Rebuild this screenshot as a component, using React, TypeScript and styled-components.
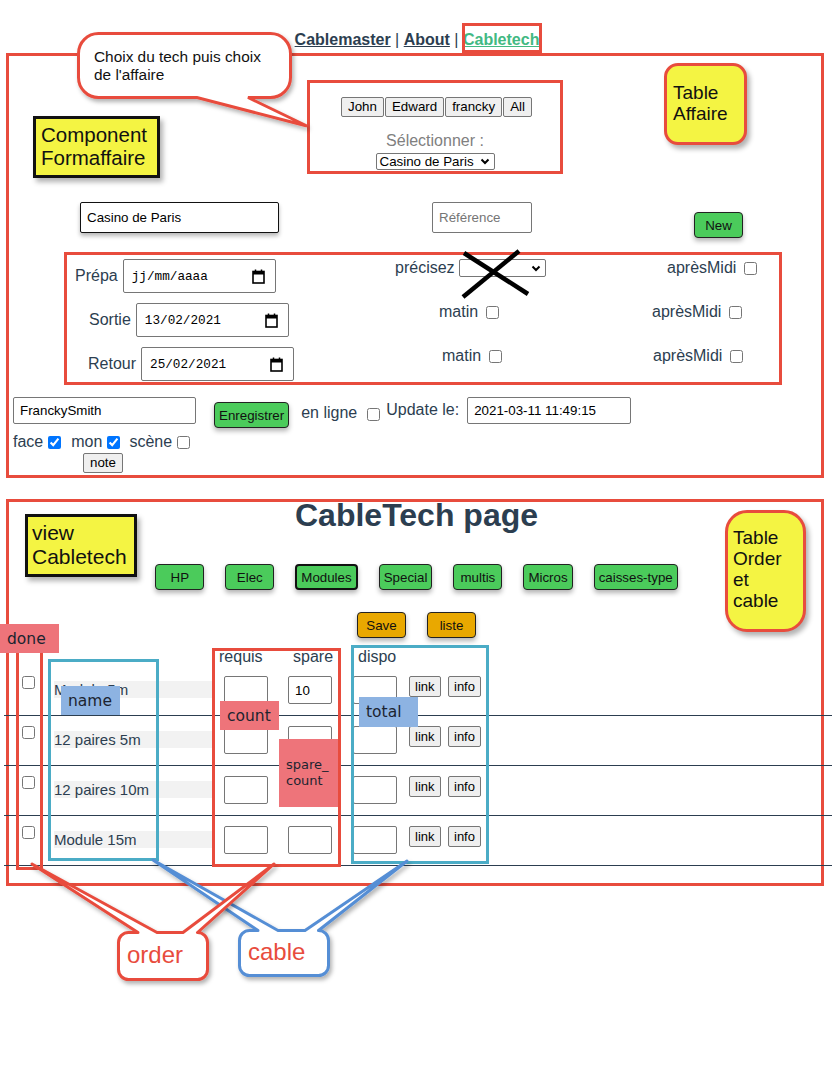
import React from 'react'
import styled, { createGlobalStyle, css } from 'styled-components'

const RED = '#e84c3d'
const TEAL = '#4bacc6'
const BLUE = '#8db3e2'
const PINK = '#ee747a'
const YELLOW = '#f4f443'
const GREEN = '#4bcb5b'
const ORANGE = '#e9a800'
const INK = '#2c3e50'
const SANS = "'Liberation Sans', Arial, sans-serif"

const GlobalStyle = createGlobalStyle`
  html, body { margin: 0; padding: 0; background: #fff; }
  body { font-family: ${SANS}; color: ${INK}; }
  * { box-sizing: border-box; }
`

const Page = styled.div`
  position: relative;
  width: 832px;
  height: 1066px;
  overflow: hidden;
`

/* ---------- nav ---------- */

const Nav = styled.nav`
  padding: 31px 0 4px 2px;
  text-align: center;
  font-size: 16px;
  line-height: 18px;
`

const NavLink = styled.a<{ $active?: boolean }>`
  font-weight: bold;
  color: ${(p) => (p.$active ? '#42b983' : INK)};
  text-decoration: underline;
`

/* ---------- sections ---------- */

const Section = styled.section<{ $mt?: number; $pb: number }>`
  margin: ${(p) => p.$mt ?? 0}px 0 0 6px;
  width: 818px;
  border: 3px solid ${RED};
  padding-bottom: ${(p) => p.$pb}px;
`

const TechBox = styled.div`
  margin: 24px 0 0 298px;
  width: 256px;
  height: 94px;
  border: 3px solid ${RED};
  padding-top: 14px;
  text-align: center;
`

const TechButtons = styled.div`
  display: flex;
  justify-content: center;
  gap: 1px;
  padding-left: 3px;
`

const PlainButton = styled.button<{ $h?: number; $size?: number; $px?: number; $mt?: number }>`
  height: ${(p) => p.$h ?? 20}px;
  margin-top: ${(p) => p.$mt ?? 0}px;
  padding: 0 ${(p) => p.$px ?? 6}px;
  font-family: ${SANS};
  font-size: ${(p) => p.$size ?? 13.33}px;
  color: #000;
  background: #efefef;
  border: 1px solid #767676;
  border-radius: 2px;
  line-height: 16px;
  flex: none;
`

const SelectLabel = styled.div`
  margin-top: 15px;
  font-size: 16px;
  line-height: 18px;
  color: #808080;
`

const SelectBox = styled.div<{ $w: number; $h: number; $mt?: number; $ml?: number; $center?: boolean }>`
  display: flex;
  align-items: center;
  justify-content: space-between;
  width: ${(p) => p.$w}px;
  height: ${(p) => p.$h}px;
  margin: ${(p) => p.$mt ?? 0}px ${(p) => (p.$center ? 'auto' : '0')} 0
    ${(p) => (p.$center ? 'auto' : `${p.$ml ?? 0}px`)};
  padding: 0 4px 0 3px;
  border: 1px solid #767676;
  border-radius: 2px;
  background: #fff;
  font-size: 13.33px;
  line-height: 15px;
  color: #000;
  text-align: left;
  flex: none;
`

const FieldRow = styled.div<{ $mt: number; $ml: number }>`
  display: flex;
  align-items: flex-start;
  margin: ${(p) => p.$mt}px 0 0 ${(p) => p.$ml}px;
`

const TextField = styled.input<{
  $w: number
  $h: number
  $ml?: number
  $mt?: number
  $dark?: boolean
  $shadow?: boolean
}>`
  width: ${(p) => p.$w}px;
  height: ${(p) => p.$h}px;
  margin: ${(p) => p.$mt ?? 0}px 0 0 ${(p) => p.$ml ?? 0}px;
  padding: 0 6px;
  border: 1px solid ${(p) => (p.$dark ? '#111' : '#767676')};
  border-radius: 2px;
  font-family: ${SANS};
  font-size: 13.33px;
  color: #000;
  background: #fff;
  box-shadow: ${(p) => (p.$shadow ? '0 3px 4px rgba(0, 0, 0, 0.28)' : 'none')};
  flex: none;
  outline: none;

  &::placeholder {
    color: #757575;
  }
`

const ActionButton = styled.button<{ $tone?: 'green' | 'orange'; $active?: boolean; $ml?: number; $mt?: number }>`
  min-width: 49px;
  height: 26px;
  padding: 0 4px;
  margin: ${(p) => p.$mt ?? 0}px 0 0 ${(p) => p.$ml ?? 0}px;
  font-family: ${SANS};
  font-size: 13.33px;
  color: #111;
  background: ${(p) => (p.$tone === 'orange' ? ORANGE : GREEN)};
  border: ${(p) => (p.$active ? '2px solid #111' : '1px solid #222')};
  border-radius: 4px;
  box-shadow: 0 3px 5px rgba(0, 0, 0, 0.3);
  flex: none;
`

const DatesBox = styled.div`
  margin: 14px 0 0 55px;
  width: 718px;
  height: 133px;
  border: 3px solid ${RED};
  padding-top: 4px;
  display: flex;
  flex-direction: column;
  gap: 10px;
`

const DateRow = styled.div`
  display: grid;
  grid-template-columns: 320px 240px 1fr;
  height: 34px;
`

const LabelCell = styled.div<{ $pad: number }>`
  display: flex;
  align-items: center;
  gap: 5px;
  padding-left: ${(p) => p.$pad}px;
  font-size: 16px;
`

const CheckCell = styled.div<{ $pad: number }>`
  display: flex;
  align-items: center;
  height: 18px;
  padding-left: ${(p) => p.$pad}px;
  font-size: 16px;
  line-height: 18px;
  white-space: nowrap;
`

const DateBox = styled.div`
  display: flex;
  align-items: center;
  justify-content: space-between;
  width: 153px;
  height: 34px;
  padding: 0 10px 0 8px;
  border: 1px solid #767676;
  border-radius: 2px;
  font-family: 'Liberation Mono', monospace;
  font-size: 12.7px;
  color: #000;
  flex: none;
`

const Check = styled.input.attrs({ type: 'checkbox' })<{ $ml?: number; $mt?: number }>`
  width: 13px;
  height: 13px;
  margin: ${(p) => p.$mt ?? 0}px 0 0 ${(p) => p.$ml ?? 0}px;
  flex: none;
`

const Label = styled.span<{ $ml?: number; $mt?: number }>`
  margin: ${(p) => p.$mt ?? 0}px 0 0 ${(p) => p.$ml ?? 0}px;
  font-size: 16px;
  line-height: 18px;
  white-space: nowrap;
  flex: none;
`

const InlineRow = styled.div<{ $mt: number; $ml: number }>`
  display: flex;
  align-items: center;
  height: 18px;
  margin: ${(p) => p.$mt}px 0 0 ${(p) => p.$ml}px;
`

/* ---------- cable tech ---------- */

const Title = styled.h1`
  margin: 1px 0 0;
  padding-left: 3px;
  text-align: center;
  font-size: 32px;
  line-height: 24px;
  font-weight: bold;
  color: ${INK};
`

const ButtonBar = styled.div<{ $mt: number }>`
  display: flex;
  justify-content: center;
  gap: 21px;
  margin-top: ${(p) => p.$mt}px;
  padding-left: 3px;
`

const Table = styled.div`
  margin: 10px -11px 0 -5px;
`

const gridCols = css`
  display: grid;
  grid-template-columns: 50px 170px 64px 65px 56px 39px 1fr;
  align-items: start;
  justify-items: start;
`

const HeadRow = styled.div`
  ${gridCols};
  height: 18px;
  font-size: 16px;
  line-height: 18px;
`

const HeadCell = styled.span<{ $col: number; $shift: number }>`
  grid-column: ${(p) => p.$col};
  margin-left: ${(p) => p.$shift}px;
`

const Row = styled.div`
  ${gridCols};
  height: 50px;
  border-bottom: 1px solid ${INK};
`

const NameCell = styled.div`
  margin-top: 15px;
  width: 158px;
  height: 17px;
  background: #f2f2f2;
  font-size: 15px;
  line-height: 17px;
  color: ${INK};
  white-space: nowrap;
`

/* ---------- annotations ---------- */

type Box = { $x: number; $y: number; $w: number; $h: number }

const placed = css<Box>`
  position: absolute;
  left: ${(p) => p.$x}px;
  top: ${(p) => p.$y}px;
  width: ${(p) => p.$w}px;
  height: ${(p) => p.$h}px;
`

const Frame = styled.div<Box & { $color: string }>`
  ${placed};
  border: 3px solid ${(p) => p.$color};
`

const Sticky = styled.div<Box & { $edge: string; $radius?: number; $size: number; $lh: number; $pad: string }>`
  ${placed};
  background: ${YELLOW};
  border: 3px solid ${(p) => p.$edge};
  border-radius: ${(p) => p.$radius ?? 0}px;
  padding: ${(p) => p.$pad};
  font-family: ${SANS};
  font-size: ${(p) => p.$size}px;
  line-height: ${(p) => p.$lh}px;
  color: #111;
  box-shadow: 3px 4px 5px rgba(0, 0, 0, 0.3);
`

const Tag = styled.div<Box & { $bg: string; $small?: boolean }>`
  ${placed};
  display: flex;
  align-items: center;
  padding-left: 7px;
  background: ${(p) => p.$bg};
  font-family: 'DejaVu Sans', sans-serif;
  font-size: ${(p) => (p.$small ? 13 : 15.5)}px;
  line-height: ${(p) => (p.$small ? 16 : 18)}px;
  color: #1c2430;
`

const Drawing = styled.svg`
  position: absolute;
  left: 0;
  top: 0;
  pointer-events: none;
`

const BubbleText = styled.div<{ $x: number; $y: number; $size: number; $lh: number; $color: string }>`
  position: absolute;
  left: ${(p) => p.$x}px;
  top: ${(p) => p.$y}px;
  font-family: ${SANS};
  font-size: ${(p) => p.$size}px;
  line-height: ${(p) => p.$lh}px;
  color: ${(p) => p.$color};
  white-space: nowrap;
`

const Chevron = () => (
  <svg width="10" height="7" viewBox="0 0 10 7">
    <path d="M1.5 1.5 L5 5 L8.5 1.5" fill="none" stroke="#000" strokeWidth="2" />
  </svg>
)

const CalendarIcon = () => (
  <svg width="13" height="15" viewBox="0 0 13 15">
    <rect x="1" y="2.5" width="11" height="11.5" fill="none" stroke="#000" strokeWidth="1.6" />
    <rect x="1" y="2.5" width="11" height="3" fill="#000" />
    <line x1="3.5" y1="0.5" x2="3.5" y2="3" stroke="#000" strokeWidth="1.5" />
    <line x1="9.5" y1="0.5" x2="9.5" y2="3" stroke="#000" strokeWidth="1.5" />
  </svg>
)

const DateInput: React.FC<{ value: string }> = ({ value }) => (
  <DateBox>
    <span>{value}</span>
    <CalendarIcon />
  </DateBox>
)

const categories = ['HP', 'Elec', 'Modules', 'Special', 'multis', 'Micros', 'caisses-type']

const cables = [
  { name: 'Module 5m', spare: '10' },
  { name: '12 paires 5m', spare: '' },
  { name: '12 paires 10m', spare: '' },
  { name: 'Module 15m', spare: '' },
]

export default function App() {
  return (
    <Page>
      <GlobalStyle />
      <Nav>
        <NavLink>Cablemaster</NavLink> | <NavLink>About</NavLink> | <NavLink $active>Cabletech</NavLink>
      </Nav>

      <Section $pb={2}>
        <TechBox>
          <TechButtons>
            {['John', 'Edward', 'francky', 'All'].map((t) => (
              <PlainButton key={t}>{t}</PlainButton>
            ))}
          </TechButtons>
          <SelectLabel>Sélectionner :</SelectLabel>
          <SelectBox $w={119} $h={17} $mt={3} $center>
            <span>Casino de Paris</span>
            <Chevron />
          </SelectBox>
        </TechBox>

        <FieldRow $mt={28} $ml={71}>
          <TextField $w={199} $h={31} $dark $shadow defaultValue="Casino de Paris" />
          <TextField $w={100} $h={31} $ml={153} placeholder="Référence" />
          <ActionButton $ml={162} $mt={10}>New</ActionButton>
        </FieldRow>

        <DatesBox>
          <DateRow>
            <LabelCell $pad={8}>
              Prépa <DateInput value="jj/mm/aaaa" />
            </LabelCell>
            <CheckCell $pad={8}>
              précisez
              <SelectBox $w={87} $h={18} $ml={4}>
                <span />
                <Chevron />
              </SelectBox>
            </CheckCell>
            <CheckCell $pad={40}>
              aprèsMidi <Check $ml={8} />
            </CheckCell>
          </DateRow>
          <DateRow>
            <LabelCell $pad={22}>
              Sortie <DateInput value="13/02/2021" />
            </LabelCell>
            <CheckCell $pad={52}>
              matin <Check $ml={8} />
            </CheckCell>
            <CheckCell $pad={25}>
              aprèsMidi <Check $ml={8} />
            </CheckCell>
          </DateRow>
          <DateRow>
            <LabelCell $pad={21}>
              Retour <DateInput value="25/02/2021" />
            </LabelCell>
            <CheckCell $pad={55}>
              matin <Check $ml={8} />
            </CheckCell>
            <CheckCell $pad={26}>
              aprèsMidi <Check $ml={8} />
            </CheckCell>
          </DateRow>
        </DatesBox>

        <FieldRow $mt={12} $ml={4}>
          <TextField $w={183} $h={27} defaultValue="FranckySmith" />
          <ActionButton $ml={18} $mt={5}>Enregistrer</ActionButton>
          <Label $ml={12} $mt={7}>en ligne</Label>
          <Check $ml={10} $mt={11} />
          <Label $ml={6} $mt={4}>Update le:</Label>
          <TextField $w={164} $h={27} $ml={8} defaultValue="2021-03-11 11:49:15" />
        </FieldRow>

        <InlineRow $mt={5} $ml={4}>
          <Label>face</Label>
          <Check $ml={5} defaultChecked />
          <Label $ml={10}>mon</Label>
          <Check $ml={5} defaultChecked />
          <Label $ml={9}>scène</Label>
          <Check $ml={5} />
        </InlineRow>

        <FieldRow $mt={2} $ml={74}>
          <PlainButton $px={6}>note</PlainButton>
        </FieldRow>
      </Section>

      <Section $mt={21} $pb={17}>
        <Title>CableTech page</Title>
        <ButtonBar $mt={37}>
          {categories.map((c) => (
            <ActionButton key={c} $active={c === 'Modules'}>
              {c}
            </ActionButton>
          ))}
        </ButtonBar>
        <ButtonBar $mt={22}>
          <ActionButton $tone="orange">Save</ActionButton>
          <ActionButton $tone="orange">liste</ActionButton>
        </ButtonBar>

        <Table>
          <HeadRow>
            <HeadCell $col={3} $shift={-5}>requis</HeadCell>
            <HeadCell $col={4} $shift={5}>spare</HeadCell>
            <HeadCell $col={5} $shift={5}>dispo</HeadCell>
          </HeadRow>
          {cables.map((c) => (
            <Row key={c.name}>
              <Check $ml={18} $mt={10} />
              <NameCell>{c.name}</NameCell>
              <TextField $w={44} $h={28} $mt={10} />
              <TextField $w={44} $h={28} $mt={10} defaultValue={c.spare} />
              <TextField $w={44} $h={28} $mt={10} />
              <PlainButton $h={21} $size={13} $px={5} $mt={10}>
                link
              </PlainButton>
              <PlainButton $h={21} $size={13} $px={5} $mt={10}>
                info
              </PlainButton>
            </Row>
          ))}
        </Table>
      </Section>

      {/* annotation layer */}
      <Frame $x={462} $y={23} $w={80} $h={30} $color={RED} />
      <Frame $x={16} $y={650} $w={27} $h={220} $color={RED} />
      <Frame $x={48} $y={659} $w={111} $h={202} $color={TEAL} />
      <Frame $x={212} $y={648} $w={129} $h={219} $color={RED} />
      <Frame $x={351} $y={645} $w={138} $h={219} $color={TEAL} />

      <Drawing width="832" height="1066" viewBox="0 0 832 1066">
        <defs>
          <filter id="shade" x="-20%" y="-20%" width="140%" height="150%">
            <feDropShadow dx="2" dy="3" stdDeviation="2" floodColor="#000" floodOpacity="0.3" />
          </filter>
        </defs>
        <path
          d="M98.5 33.5 H270.5 A20 20 0 0 1 290.5 53.5 V77.5 A20 20 0 0 1 270.5 97.5 H248 L307 126 L197 97.5 H98.5 A20 20 0 0 1 78.5 77.5 V53.5 A20 20 0 0 1 98.5 33.5 Z"
          fill="#fff"
          stroke={RED}
          strokeWidth="3"
          filter="url(#shade)"
        />
        <line x1="463" y1="297" x2="519" y2="251" stroke="#000" strokeWidth="4.5" />
        <line x1="464" y1="253" x2="528" y2="294" stroke="#000" strokeWidth="4.5" />
        <path
          d="M249.5 930.5 H258 L153 860 L278 930.5 H305 L407 861 L318.5 930.5 A10 10 0 0 1 328.5 940.5 V965.5 A10 10 0 0 1 318.5 975.5 H249.5 A10 10 0 0 1 239.5 965.5 V940.5 A10 10 0 0 1 249.5 930.5 Z"
          fill="#fff"
          stroke="#558ed5"
          strokeWidth="3"
          strokeLinejoin="round"
          filter="url(#shade)"
        />
        <path
          d="M128.5 932.5 H138 L32 864 L157 932.5 H183 L274 864 L197.5 932.5 A10 10 0 0 1 207.5 942.5 V969.5 A10 10 0 0 1 197.5 979.5 H128.5 A10 10 0 0 1 118.5 969.5 V942.5 A10 10 0 0 1 128.5 932.5 Z"
          fill="#fff"
          stroke={RED}
          strokeWidth="3"
          strokeLinejoin="round"
          filter="url(#shade)"
        />
      </Drawing>

      <BubbleText $x={94} $y={48} $size={15.4} $lh={17.5} $color="#111">
        Choix du tech puis choix
        <br />
        de l'affaire
      </BubbleText>
      <BubbleText $x={127} $y={941} $size={24} $lh={27} $color={RED}>
        order
      </BubbleText>
      <BubbleText $x={248} $y={938} $size={24} $lh={27} $color={RED}>
        cable
      </BubbleText>

      <Sticky $x={33} $y={116} $w={127} $h={62} $edge="#111" $size={20.5} $lh={23} $pad="4px 0 0 5px">
        Component
        <br />
        Formaffaire
      </Sticky>
      <Sticky $x={664} $y={63} $w={83} $h={82} $edge={RED} $radius={14} $size={19} $lh={21} $pad="16px 0 0 6px">
        Table
        <br />
        Affaire
      </Sticky>
      <Sticky $x={25} $y={514} $w={112} $h={63} $edge="#111" $size={21} $lh={24} $pad="4px 0 0 4px">
        view
        <br />
        Cabletech
      </Sticky>
      <Sticky $x={725} $y={510} $w={81} $h={122} $edge={RED} $radius={22} $size={19} $lh={21} $pad="14px 0 0 5px">
        Table
        <br />
        Order
        <br />
        et
        <br />
        cable
      </Sticky>

      <Tag $x={0} $y={624} $w={59} $h={29} $bg={PINK}>
        done
      </Tag>
      <Tag $x={61} $y={686} $w={59} $h={29} $bg={BLUE}>
        name
      </Tag>
      <Tag $x={220} $y={701} $w={59} $h={29} $bg={PINK}>
        count
      </Tag>
      <Tag $x={279} $y={739} $w={59} $h={68} $bg={PINK} $small>
        spare_
        <br />
        count
      </Tag>
      <Tag $x={359} $y={697} $w={59} $h={30} $bg={BLUE}>
        total
      </Tag>
    </Page>
  )
}
